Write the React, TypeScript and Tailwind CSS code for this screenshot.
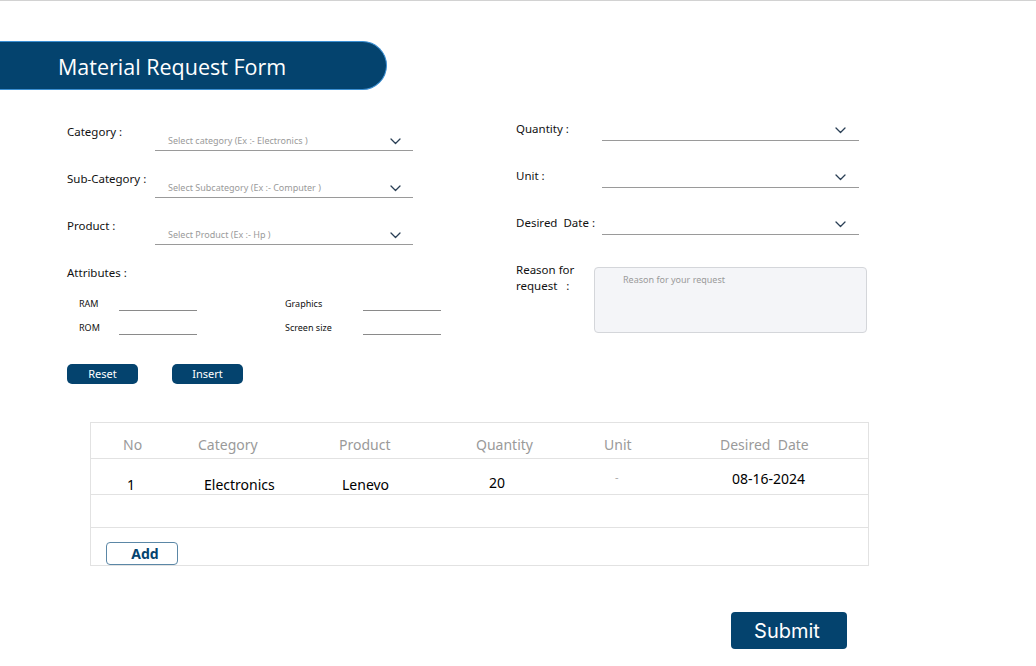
import React from 'react';

const Chevron = () => (
  <svg width="11" height="7" viewBox="0 0 11 7" fill="none">
    <polyline points="1,1 5.5,5.5 10,1" stroke="#2a3f55" strokeWidth="1.3" strokeLinecap="round" strokeLinejoin="round" />
  </svg>
);

function SelectRow({ label, placeholder }: { label: string; placeholder: string }) {
  return (
    <div className="flex items-start h-[47px]">
      <div className="w-[88px] text-[11.5px] leading-[16px] text-[#111] pt-[1px]">{label}</div>
      <div className="mt-[12px] w-[258px] h-[16px] border-b border-[#9a9a9a] flex items-start justify-between pl-[13px] pr-[12px]">
        <span className="text-[9px] leading-[12px] text-[#9a9a9a]">{placeholder}</span>
        <span className="mt-[3px]"><Chevron /></span>
      </div>
    </div>
  );
}

function RightRow({ label }: { label: string }) {
  return (
    <div className="flex items-start h-[47px]">
      <div className="w-[86px] text-[11.5px] leading-[16px] text-[#111] whitespace-pre">{label}</div>
      <div className="w-[257px] h-[20px] border-b border-[#9a9a9a] flex items-center justify-end pr-[13px]">
        <Chevron />
      </div>
    </div>
  );
}

function AttrRow({ a, b }: { a: string; b: string }) {
  return (
    <div className="flex items-start h-[24px] pl-[12px]">
      <div className="w-[40px] text-[9px] leading-[12px] text-[#111]">{a}</div>
      <div className="w-[78px] h-[13px] border-b border-[#8a8a8a]" />
      <div className="ml-[88px] w-[78px] text-[9px] leading-[12px] text-[#111]">{b}</div>
      <div className="w-[78px] h-[13px] border-b border-[#8a8a8a]" />
    </div>
  );
}

const rows = [
  { no: '1', category: 'Electronics', product: 'Lenevo', qty: '20', unit: '-', date: '08-16-2024' },
];

function App() {
  return (
    <div className="w-[1036px] h-[666px] bg-white overflow-hidden border-t border-[#d2d2d2]" style={{ fontFamily: '"Noto Sans", "Open Sans", sans-serif' }}>
      <div className="mt-[40px] w-[387px] h-[49px] bg-[#04436e] border border-l-0 border-[#3b8fd3] rounded-r-[25px] flex items-center pl-[58px] pt-[3px]">
        <h1 className="text-[21.5px] text-white" style={{ fontFamily: '"Open Sans", sans-serif' }}>Material Request Form</h1>
      </div>

      <div className="flex items-start">
        <div className="ml-[67px] pt-[33px] w-[449px]">
          <SelectRow label="Category :" placeholder="Select category (Ex :- Electronics )" />
          <SelectRow label="Sub-Category :" placeholder="Select Subcategory (Ex :- Computer )" />
          <SelectRow label="Product :" placeholder="Select Product (Ex :- Hp )" />
          <div className="text-[11.5px] leading-[16px] text-[#111] pt-[1px]">Attributes :</div>
          <div className="mt-[17px]">
            <AttrRow a="RAM" b="Graphics" />
            <AttrRow a="ROM" b="Screen size" />
          </div>
          <div className="mt-[18px] flex gap-[34px]">
            <button className="w-[71px] h-[20px] rounded-[5px] bg-[#04436e] text-white text-[11px] leading-[20px]">Reset</button>
            <button className="w-[71px] h-[20px] rounded-[5px] bg-[#04436e] text-white text-[11px] leading-[20px]">Insert</button>
          </div>
        </div>

        <div className="pt-[31px]">
          <RightRow label="Quantity :" />
          <RightRow label="Unit :" />
          <RightRow label="Desired  Date :" />
          <div className="flex items-start">
            <div className="w-[78px] text-[11.5px] leading-[16px] text-[#111] whitespace-pre">{'Reason for\nrequest   :'}</div>
            <div className="mt-[5px] w-[273px] h-[66px] bg-[#f4f5f8] border border-[#d4d6da] rounded-[4px] pl-[28px] pt-[6px]">
              <div className="text-[9px] leading-[12px] text-[#9a9a9a]">Reason for your request</div>
            </div>
          </div>
        </div>
      </div>

      <div className="mt-[38px] ml-[90px] w-[779px] border border-[#e2e2e2]">
        <div className="grid grid-cols-[89px_140px_140px_130px_110px_168px] h-[36px] border-b border-[#e2e2e2] text-[14px] text-[#9a9a9a] items-center pt-[7px]">
          <div className="pl-[32px]">No</div>
          <div className="pl-[18px]">Category</div>
          <div className="pl-[19px]">Product</div>
          <div className="pl-[16px]">Quantity</div>
          <div className="pl-[14px]">Unit</div>
          <div className="pl-[20px]">Desired&nbsp; Date</div>
        </div>
        {rows.map((r, i) => (
          <div key={i} className="grid grid-cols-[89px_140px_140px_130px_110px_168px] h-[36px] border-b border-[#e2e2e2] text-[14px] text-black">
            <div className="pl-[36px] pt-[15px]">{r.no}</div>
            <div className="pl-[24px] pt-[15px]">{r.category}</div>
            <div className="pl-[22px] pt-[15px]">{r.product}</div>
            <div className="pl-[29px] pt-[13px]">{r.qty}</div>
            <div className="pl-[25px] pt-[10px] text-[#aaa] text-[11px]">{r.unit}</div>
            <div className="pl-[32px] pt-[9px]">{r.date}</div>
          </div>
        ))}
        <div className="h-[33px] border-b border-[#e2e2e2]" />
        <div className="h-[37px] flex items-end pl-[15px]">
          <button className="w-[72px] h-[23px] bg-white border border-[#5b87a6] rounded-[4px] text-[14px] font-bold text-[#04436e] leading-[20px] pl-[6px]">Add</button>
        </div>
      </div>

      <div className="mt-[46px] ml-[731px]">
        <button className="w-[116px] h-[37px] bg-[#04436e] rounded-[4px] text-white text-[20px] pr-[4px]" style={{ fontFamily: 'Inter, sans-serif' }}>Submit</button>
      </div>
    </div>
  );
}

export default App;
